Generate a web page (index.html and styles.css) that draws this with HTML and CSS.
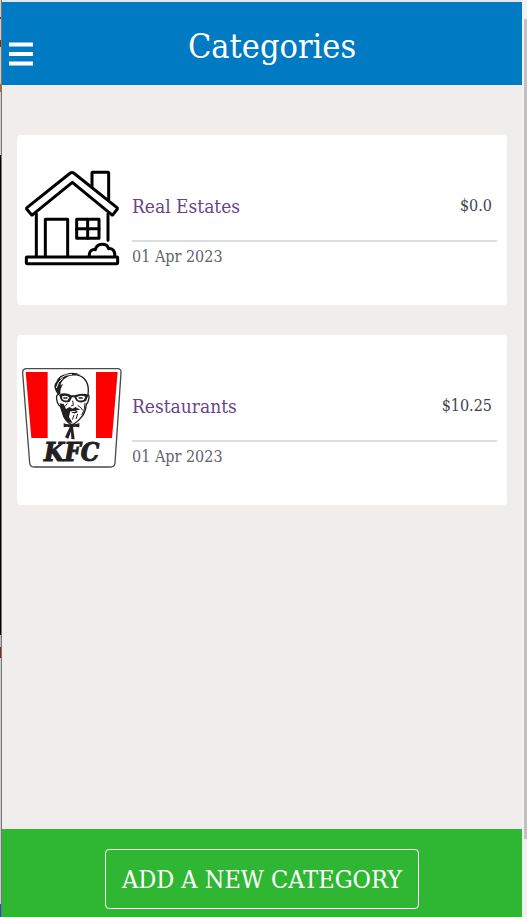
FILE: index.html
```html
<!DOCTYPE html>
<html lang="en">
<head>
<meta charset="utf-8">
<meta name="viewport" content="width=device-width, initial-scale=1">
<title>Categories</title>
<link rel="stylesheet" href="styles.css">
</head>
<body>
<div class="window">
  <div class="edge"></div>
  <div class="app">
    <header class="topbar">
      <button class="menu" type="button" aria-label="Menu">
        <svg viewBox="0 0 24 24" width="24" height="24"><path d="M0 0.500h24v4H0zM0 10h24v4H0zM0 19.500h24v4H0z" fill="#fff"/></svg>
      </button>
      <h1 class="title">Categories</h1>
    </header>
    <main class="list">
      <article class="card">
        <svg class="icon" viewBox="36 39 300 300" fill="none" stroke="#000" stroke-width="9" stroke-linejoin="round" stroke-linecap="round">
          <path d="M246 94V53q0-1 2-1h46q2 0 2 2v80M294 176v80" />
          <path d="M79 176v128M106 304V193h67v111" />
          <path d="M187 82L305 179q2 2 4 0l13-17q1-2-1-4L191 54q-5-3-10 0L51 158q-2 2-1 4l14 17q2 2 4 0z"/>
          <rect x="200" y="193" width="67" height="57"/>
          <path d="M233 193v57M200 221h67"/>
          <rect x="49" y="306" width="274" height="20" rx="2"/>
          <path d="M238 304c-2-14 7-22 18-20 5-21 34-21 40-3 13-2 20 9 18 23"/>
        </svg>
        <div class="details">
          <div class="summary"><a class="name" href="#">Real Estates</a><span class="amount">$0.0</span></div>
          <time class="date" datetime="2023-04-01">01 Apr 2023</time>
        </div>
      </article>
      <article class="card">
        <svg class="icon" viewBox="36 39 300 300">
          <path d="M50 41H322Q334 41 333 53L315 324Q314 336 302 336H72Q60 336 59 324L38 54Q37 41 50 41Z" fill="#fff" stroke="#4a4a4a" stroke-width="4"/>
          <path d="M47 51h66v198H64zM258 51h65l-17 198h-48z" fill="#f00"/>
          <path d="M145 112C146 76 162 60 190 59C219 59 235 78 235 106L234 120Q239 121 236 133Q234 145 229 148Q226 177 211 190Q197 207 184 209Q163 196 158 174L151 154Q142 149 140 132Q138 120 145 118Z" fill="#fff" stroke="#231f20" stroke-width="4"/>
          <path d="M137 108Q128 91 139 80Q146 61 168 57Q191 49 212 59Q183 57 166 70Q154 77 151 91L160 87Q150 99 151 117L144 120Z" fill="#231f20"/>
          <path d="M139 99Q143 80 158 70M150 71Q165 57 186 58" fill="none" stroke="#fff" stroke-width="3"/>
          <path d="M147 119Q165 110 184 121H194Q213 112 236 119L233 126L228 138Q211 147 199 137L193 127H186L179 140Q162 145 153 136Z" fill="#231f20"/>
          <path d="M156 124Q169 119 178 127L173 136Q162 138 157 132ZM199 127Q212 119 226 125L221 135Q209 139 203 134Z" fill="#fff"/>
          <path d="M160 129h12M206 129h12" stroke="#231f20" stroke-width="4"/>
          <path d="M149 145L161 147L168 162L179 156L187 161L197 156L211 165L196 165L204 171Q190 181 181 168L177 186L188 204L175 202Q157 188 157 171Z" fill="#231f20"/>
          <path d="M172 145Q168 153 161 157M188 137L190 151L183 153M203 151Q215 158 218 166M225 144Q225 168 215 180M181 165L200 165M192 180L187 194M203 177L198 192" fill="none" stroke="#231f20" stroke-width="3"/>
          <path d="M181 168Q190 174 199 168Z" fill="#fff"/>
          <path d="M161 205Q173 209 184 207Q196 209 208 204L208 217Q196 214 189 216L194 253L184 252L183 229L175 251L165 247L179 217Q170 213 161 217Z" fill="#231f20"/>
          <text class="wordmark" x="185" y="319" text-anchor="middle">KFC</text>
        </svg>
        <div class="details">
          <div class="summary"><a class="name" href="#">Restaurants</a><span class="amount">$10.25</span></div>
          <time class="date" datetime="2023-04-01">01 Apr 2023</time>
        </div>
      </article>
    </main>
    <footer class="actions">
      <button class="add" type="button">ADD A NEW CATEGORY</button>
    </footer>
  </div>
  <div class="track"><div class="thumb"></div></div>
</div>
</body>
</html>
```
FILE: styles.css
```css
* {
  box-sizing: border-box;
}

body {
  margin: 0;
  background: #f0eeec;
  font-family: "DejaVu Serif Condensed", "DejaVu Serif", serif;
}

.window {
  display: grid;
  grid-template-columns: 2px 1fr 5px;
  min-height: 100vh;
}

/* Sliver of the window behind this one */
.edge {
  border-right: 1px solid #777;
  background: linear-gradient(#ccc 0 17px, #633b16 17px 19px, #ccc 19px 40px, #633b16 40px 47px, #ccc 47px 84px, #b86b20 84px 92px, #ccc 92px 155px, #000 155px 635px, #bbb 635px 647px, #8c2428 647px 658px, #ccc 658px 904px, #0065b3 904px);
}

.app {
  display: flex;
  flex-direction: column;
  border-top: 2px solid #e4e6e8;
}

.topbar {
  display: grid;
  grid-template-columns: 36px 1fr 16px;
  align-items: center;
  height: 83px;
  background: #007ac3;
  color: #fff;
}

.menu {
  display: flex;
  margin: 20px 0 0;
  padding: 0 0 0 7px;
  border: 0;
  background: none;
}

.title {
  margin: 0;
  padding-top: 4px;
  text-align: center;
  font-size: 34px;
  font-weight: 400;
  line-height: 40px;
}

.list {
  display: flex;
  flex: 1;
  flex-direction: column;
  gap: 30px;
  padding: 50px 15px;
}

.card {
  display: flex;
  gap: 10px;
  min-height: 170px;
  padding: 33px 10px 33px 5px;
  border-radius: 4px;
  background: #fff;
}

.icon {
  flex: none;
  width: 100px;
  height: 100px;
}

.wordmark {
  fill: #231f20;
  stroke: #231f20;
  stroke-width: 3px;
  font: italic 700 78px "DejaVu Serif Condensed", "DejaVu Serif", serif;
}

.details {
  flex: 1;
  padding-top: 22px;
}

.summary {
  display: flex;
  justify-content: space-between;
  height: 52px;
  padding: 4px 5px 0 0;
  border-bottom: 2px solid #d9dde2;
  line-height: 24px;
}

.name {
  color: #6a4488;
  font-size: 19px;
  text-decoration: none;
}

.amount {
  color: #3c444e;
  font-size: 16px;
}

.date {
  display: block;
  padding-top: 3px;
  color: #5d646c;
  font-size: 16px;
  line-height: 24px;
}

.actions {
  display: flex;
  justify-content: center;
  padding: 20px 0 8px;
  background: #2fb734;
}

.add {
  height: 60px;
  padding: 0 16px;
  border: 1px solid #fff;
  border-radius: 4px;
  background: transparent;
  color: #fff;
  font: 400 25px "DejaVu Serif Condensed", "DejaVu Serif", serif;
}

.track {
  padding: 19px 0 78px 2px;
  background: #f1f1f1;
}

.thumb {
  height: 100%;
  background: #c1c1c1;
}
```
